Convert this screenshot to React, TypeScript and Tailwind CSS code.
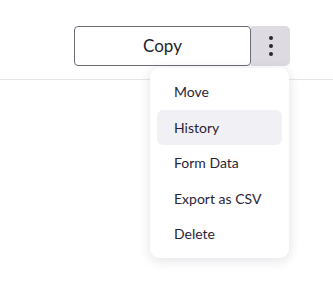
import React from 'react';

const items = ['Move', 'History', 'Form Data', 'Export as CSV', 'Delete'];

const App = () => {
  return (
    <div className="w-[333px] h-[301px] bg-white relative" style={{ fontFamily: 'Lato, "Noto Sans", sans-serif' }}>
      <div className="h-[80px] border-b border-[#e6e5ea] flex justify-end items-start pt-[26px] pr-[43px]">
        <button className="w-[177px] h-[40px] rounded-[4px] border border-[#6f6a7a] bg-white text-[17px] text-[#221e2c]">
          Copy
        </button>
        <button className="w-[39px] h-[40px] rounded-r-[5px] bg-[#dddae1] flex items-center justify-center">
          <svg width="6" height="22" viewBox="0 0 6 22">
            <circle cx="3" cy="3" r="2" fill="#2a2536" />
            <circle cx="3" cy="11" r="2" fill="#2a2536" />
            <circle cx="3" cy="19" r="2" fill="#2a2536" />
          </svg>
        </button>
      </div>
      <div className="absolute left-[150px] top-[68px] w-[139px] rounded-[9px] bg-white py-[6px] px-[7px] shadow-[0_2px_12px_rgba(40,30,60,0.14)]">
        {items.map(item => (
          <div
            key={item}
            className={`h-[35.5px] flex items-center px-[17px] rounded-[6px] text-[14px] text-[#2a2536] ${item === 'History' ? 'bg-[#f1f0f4]' : ''}`}
          >
            {item}
          </div>
        ))}
      </div>
    </div>
  );
};

export default App;
